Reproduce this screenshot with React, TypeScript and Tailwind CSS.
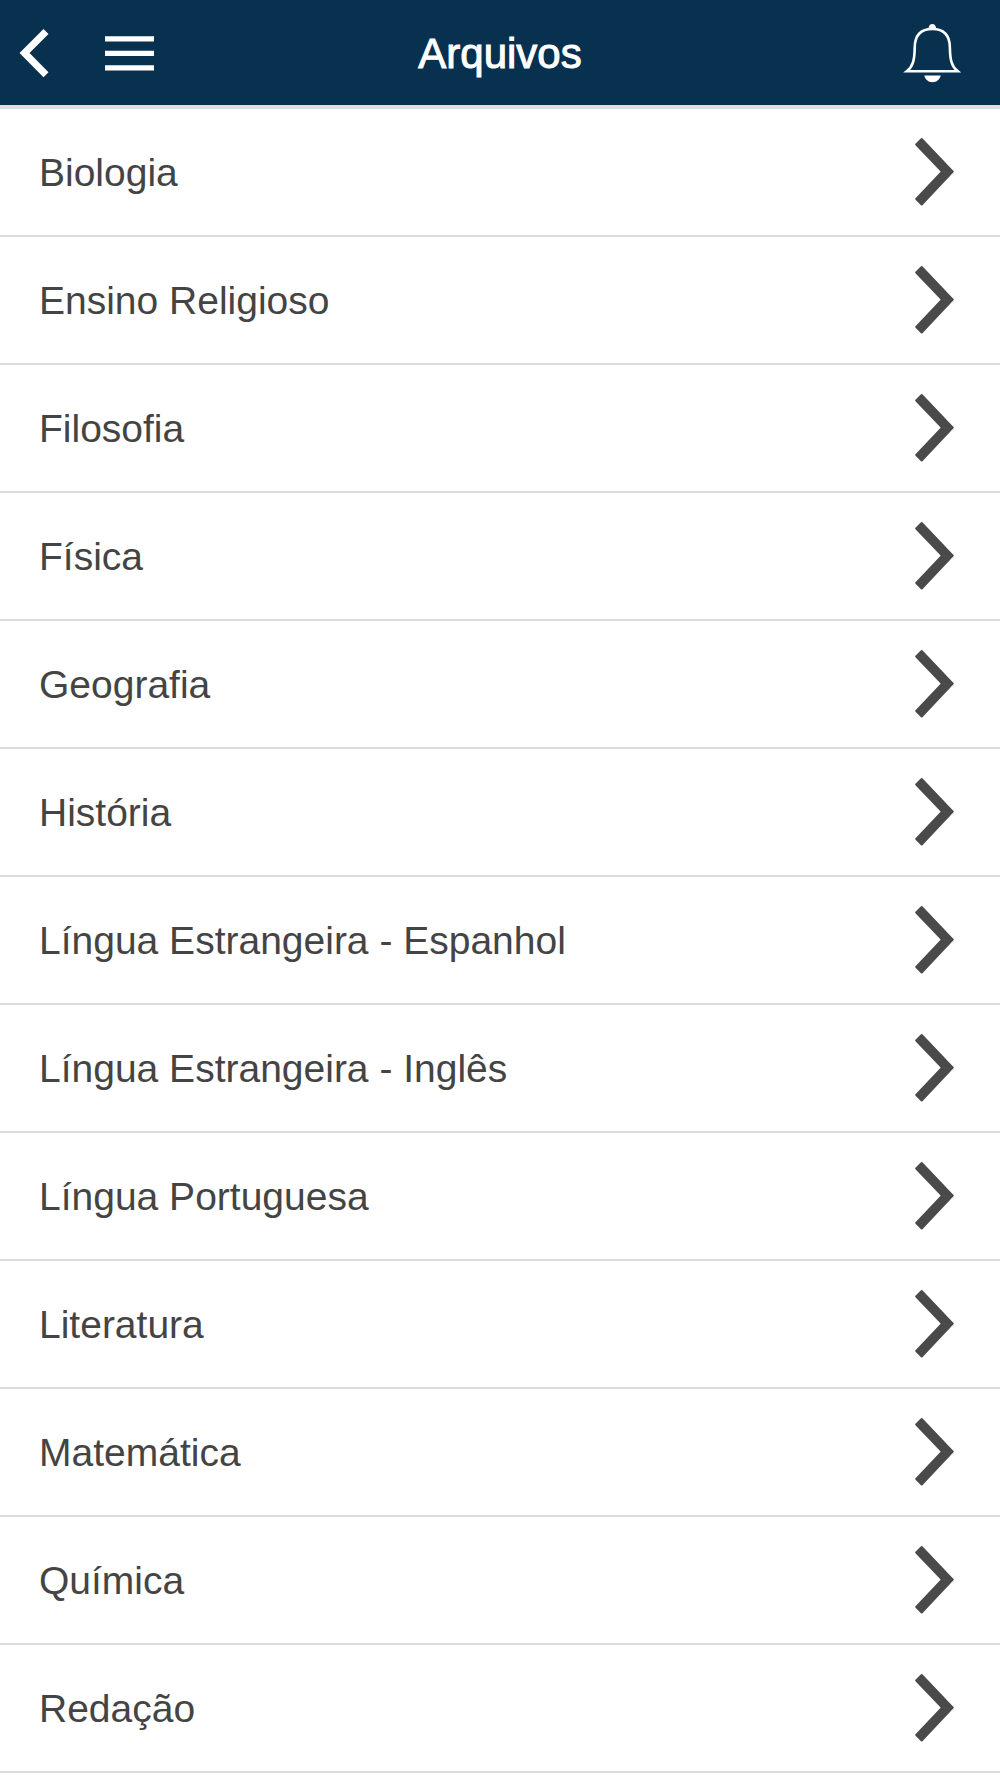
const subjects = [
  "Biologia",
  "Ensino Religioso",
  "Filosofia",
  "Física",
  "Geografia",
  "História",
  "Língua Estrangeira - Espanhol",
  "Língua Estrangeira - Inglês",
  "Língua Portuguesa",
  "Literatura",
  "Matemática",
  "Química",
  "Redação",
];

function BackIcon() {
  return (
    <svg className="h-[50px] w-[30px]" viewBox="0 0 30 50" fill="currentColor" aria-hidden="true">
      <path d="M24.5 1l5 5-19 19 19 19.2-5 5L.5 25z" />
    </svg>
  );
}

function MenuIcon() {
  return (
    <svg className="h-9 w-[49px]" viewBox="0 0 49 36" fill="currentColor" aria-hidden="true">
      <path d="M0 1.2h49v5.2H0zM0 15.700h49v5.2H0zM0 30.200h49v5.2H0z" />
    </svg>
  );
}

function BellIcon() {
  return (
    <svg className="h-[60px] w-[58px]" viewBox="23 23 58 60" fill="none" aria-hidden="true">
      <path
        d="M26.8 71.3C33 66.500 34.500 60 34.700 48C34.700 35 41 29 52.300 29C63.600 29 69.900 35 69.900 48C70.100 60 71.600 66.500 77.800 71.300Z"
        stroke="currentColor"
        strokeWidth="2.6"
      />
      <path
        d="M48.500 28.500a3.800 4.500 0 0 1 7.600 0zM44.300 75.500h16.400c-1 4-4 6.700-8.200 6.700s-7.200-2.700-8.200-6.700z"
        fill="currentColor"
      />
    </svg>
  );
}

function ChevronIcon() {
  return (
    <svg
      className="h-[70px] w-10 shrink-0 text-[#4a4a4a]"
      viewBox="0 0 40 70"
      fill="currentColor"
      stroke="currentColor"
      strokeWidth="2"
      strokeLinejoin="round"
      aria-hidden="true"
    >
      <path d="M7.700 2L2.200 7.500L28 34.600L2.200 62L7.700 67.500L38.800 34.600z" />
    </svg>
  );
}

export default function App() {
  return (
    <div className="min-h-screen bg-white font-['Liberation_Sans',Arial,sans-serif]">
      <header className="grid h-[109px] grid-cols-[1fr_auto_1fr] items-center border-b-4 border-[#dedede] bg-[#08304f] px-[19px] text-white">
        <div className="flex items-center gap-14">
          <button type="button" aria-label="Voltar">
            <BackIcon />
          </button>
          <button type="button" aria-label="Menu">
            <MenuIcon />
          </button>
        </div>
        <h1 className="pt-[2px] text-[42px] leading-[48px] font-normal [-webkit-text-stroke:1px_white]">Arquivos</h1>
        <button type="button" aria-label="Notificações" className="mr-5 justify-self-end">
          <BellIcon />
        </button>
      </header>

      <ul>
        {subjects.map((subject) => (
          <li key={subject} className="border-b-2 border-[#dcdcdc]">
            <a href="#" className="flex h-[126px] items-center justify-between pr-[46px] pl-[39px]">
              <span className="pt-[2px] text-[39px] leading-[48px] text-[#444444]">{subject}</span>
              <ChevronIcon />
            </a>
          </li>
        ))}
      </ul>
    </div>
  );
}
